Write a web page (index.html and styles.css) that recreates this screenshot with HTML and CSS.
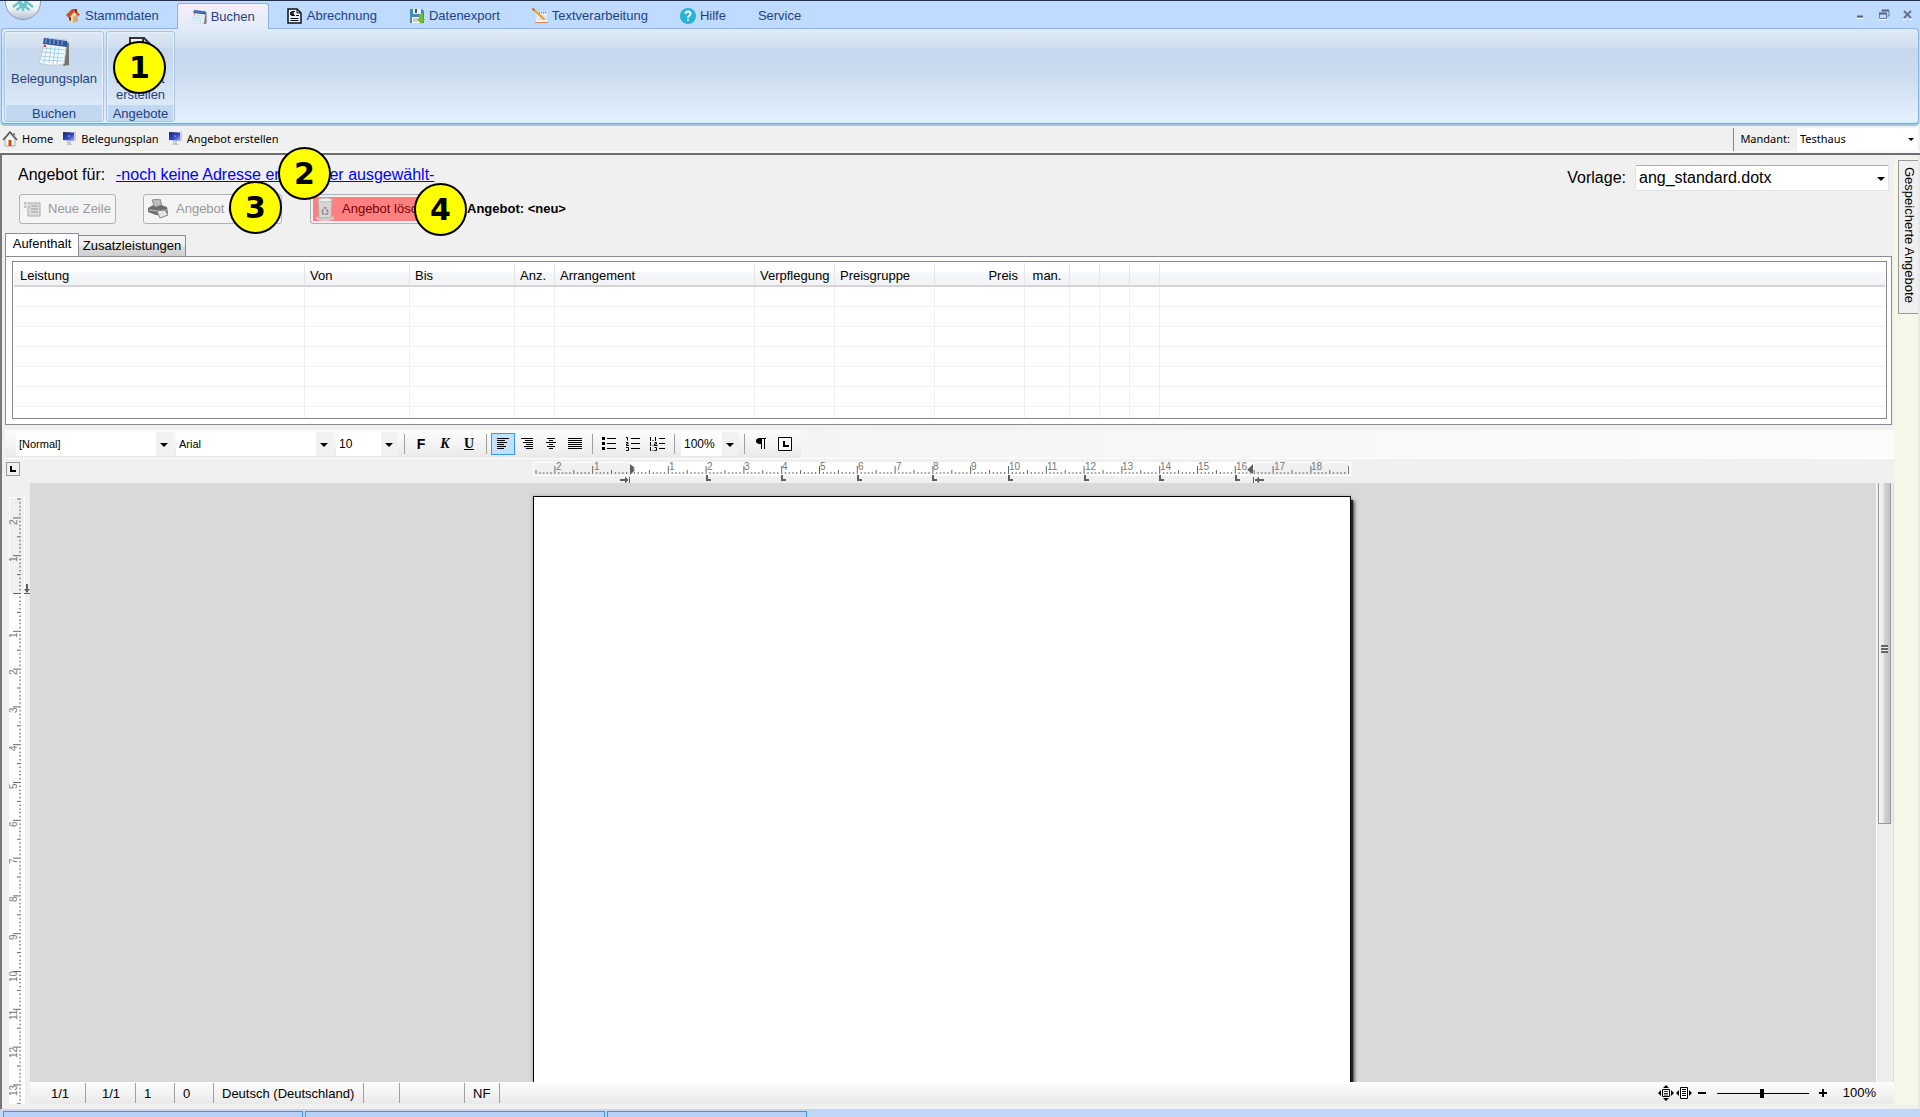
FILE: index.html
```html
<!DOCTYPE html>
<html lang="de">
<head>
<meta charset="utf-8">
<title>Angebot erstellen</title>
<link rel="stylesheet" href="styles.css">
</head>
<body>
<svg width="0" height="0" class="defs" aria-hidden="true">
  <defs>
    <linearGradient id="orb" x1="0" y1="0" x2="0" y2="1"><stop offset="0" stop-color="#fff"/><stop offset=".7" stop-color="#eef1f6"/><stop offset="1" stop-color="#b4bfd0"/></linearGradient>
    <linearGradient id="screen" x1="0" y1="0" x2="1" y2="1"><stop offset="0" stop-color="#16207a"/><stop offset=".6" stop-color="#3a4cc4"/><stop offset="1" stop-color="#a9b5f0"/></linearGradient>
    <symbol id="calendar" viewBox="0 0 32 30">
      <path d="M27 3l4 3v22l-6 1z" fill="#77746b"/>
      <path d="M6 1l23 2-3 24c-8 2-17 1-25-1C4 18 6 10 6 1z" fill="#f7fbfd" stroke="#c5ccd0"/>
      <path d="M6 1l23 3v6L5 7z" fill="#2b559c"/>
      <path d="M8 2v4M12 2v5M16 3v4M20 3v5M24 4v4" stroke="#9fb4d8"/>
      <path d="M5 11l22 2M4 15l22 2M3 19l22 2M3 23l22 1M9 9L6 26M13 9l-2 17M17 10l-2 17M21 10l-2 17" stroke="#a3d3e4" fill="none"/>
      <path d="M6 8h2v2H6z" fill="#d33"/>
    </symbol>
    <symbol id="monitor" viewBox="0 0 15 15">
      <path d="M1 1l11 .5V10L1 9z" fill="url(#screen)"/><path d="M12 1l2-1v10l-2 .5z" fill="#c9ccd6"/>
      <path d="M5 10l4 .5v2l2 1.5H4l1-1.500z" fill="#c4c8d0"/><path d="M6 4l2 1-1 1.500z" fill="#9fb4ff"/>
    </symbol>
    <pattern id="cmx" width="37.8" height="14" patternUnits="userSpaceOnUse" x="97">
      <path d="M.5 4v8M19.400 8v4M4.300 10v2M8.100 10v2M11.800 10v2M15.600 10v2M23.200 10v2M27 10v2M30.700 10v2M34.500 10v2" stroke="#666"/>
    </pattern>
    <pattern id="cmy" width="16" height="37.8" patternUnits="userSpaceOnUse" y="96">
      <path d="M4 .5h8M8 19.400h4M10 4.300h2M10 8.100h2M10 11.800h2M10 15.600h2M10 23.200h2M10 27h2M10 30.700h2M10 34.500h2" stroke="#666"/>
    </pattern>
  </defs>
</svg>

<header>
  <nav class="tabbar" aria-label="Menüband">
    <a class="logo" href="#" aria-label="Start"><svg width="38" height="20" viewBox="0 0 38 20"><circle cx="19" cy="1" r="17.500" fill="url(#orb)" stroke="#8e9db5"/><path d="M9 6l9-7M29 6l-9-7M16.500 0v6l-4 3M21.500 0v6l4 3M19 2v8" stroke="#6cc5c8" stroke-width="2.500" fill="none"/></svg></a>
    <a class="tab" href="#"><svg width="16" height="16" viewBox="0 0 16 16"><path d="M3 7l5-4 5 5v5l-5 2-5-3z" fill="#f4d9b4"/><path d="M8 9l5-3v7l-5 2z" fill="#dba976"/><path d="M1 7l6-6 3 0 5 6-2 1-4-4-5 6z" fill="#c8502c"/><path d="M10 1h2v3h-2z" fill="#7a3a22"/><path d="M4 9h2v4l-2-1z" fill="#6b3d22"/></svg>Stammdaten</a>
    <a class="tab active" href="#"><svg width="16" height="16"><use href="#calendar"/></svg>Buchen</a>
    <a class="tab" href="#"><svg width="16" height="16" viewBox="0 0 16 16"><path d="M1 1h9l4 4v10H1z" fill="#e8f1ff" stroke="#111" stroke-width="1.500"/><path d="M10 1v4h4M3.500 12.500h8M3.500 10.500h8M9 7.500h3" stroke="#111" fill="none"/><path d="M8 3.500H6q-2 0-2 2t2 2h2M3 4.800h4M3 6.300h4" stroke="#111" fill="none" stroke-width="1.200"/></svg>Abrechnung</a>
    <a class="tab" href="#"><svg width="16" height="16" viewBox="0 0 16 16"><path d="M1 1h12l2 2v12H1z" fill="#3f8fb5"/><path d="M4 1h8v5H4z" fill="#e8f0f4"/><path d="M6 1h2v4H6z" fill="#35586a"/><path d="M3 9h10v6H3z" fill="#fff"/><path d="M4 11h6M4 13h5" stroke="#99a"/><path d="M10 6h4v5h2l-4 5-4-5h2z" fill="#6cc024"/></svg>Datenexport</a>
    <a class="tab" href="#"><svg width="16" height="16" viewBox="0 0 16 16"><path d="M4 4l11 1-1 5 2 5H3l2-5z" fill="#f4f5fa"/><path d="M5 5h10" stroke="#444a66" stroke-dasharray="1 1"/><path d="M3 14.500h13" stroke="#d8895a"/><path d="M6 8h7M6 11h8" stroke="#b8c4e0"/><path d="M1.500 1.500l11 10" stroke="#e8a21d" stroke-width="2"/><path d="M0 0l3 1-2 2z" fill="#b5412e"/></svg>Textverarbeitung</a>
    <a class="tab" href="#"><svg width="16" height="16" viewBox="0 0 16 16"><circle cx="8" cy="8" r="8" fill="#25b4d5"/><path d="M5.500 6q0-2.500 2.500-2.500T10.500 6Q10.500 7.300 9 8 8 8.500 8 10M8 11.300v1.700" stroke="#fff" stroke-width="1.900" fill="none"/></svg>Hilfe</a>
    <a class="tab" href="#">Service</a>
    <div class="winbtns">
      <button type="button" aria-label="Minimieren"><svg width="12" height="12" viewBox="0 0 12 12"><path d="M3 7.500h6" stroke="#54657c" stroke-width="2"/><path d="M3 9.500h6" stroke="#fff"/></svg></button>
      <button type="button" aria-label="Wiederherstellen"><svg width="12" height="12" viewBox="0 0 12 12"><path d="M4 3V1.500h7V7H9M1.500 4.500h7v5h-7z" fill="none" stroke="#6c7f9c"/><path d="M1 4.500h8M4 1.500h7" stroke="#54657c" stroke-width="2"/><path d="M1 10.500h8" stroke="#fff"/></svg></button>
      <button type="button" aria-label="Schließen"><svg width="12" height="12" viewBox="0 0 12 12"><path d="M2 2l7 7M9 2L2 9" stroke="#66758c" stroke-width="2"/><path d="M1 10.500h3M7 10.500h3" stroke="#fff"/></svg></button>
    </div>
  </nav>
  <div class="ribbon">
    <section class="group">
      <button type="button"><svg width="32" height="30"><use href="#calendar"/></svg><span>Belegungsplan</span></button>
      <h2>Buchen</h2>
    </section>
    <section class="group">
      <button type="button"><svg width="32" height="30" viewBox="0 0 32 30"><path d="M5 1h14l6 6v20H5z" fill="#f2f5f8" stroke="#333" stroke-width="2"/><path d="M18 1v7h7" fill="none" stroke="#333" stroke-width="2"/></svg><span>Angebot<br>erstellen</span></button>
      <h2>Angebote</h2>
    </section>
  </div>
</header>

<nav class="crumbs" aria-label="Verlauf">
  <a href="#"><svg width="16" height="16" viewBox="0 0 16 16"><path d="M3 8l5-6 5 6v7H3z" fill="#f3f3ef" stroke="#aaa"/><path d="M1 9l7-8 7 8" fill="none" stroke="#555" stroke-width="1.500"/><path d="M6.500 9h3v6h-3z" fill="#c0521c"/><path d="M11 2h2v3h-2z" fill="#888"/></svg>Home</a>
  <a href="#"><svg width="15" height="15"><use href="#monitor"/></svg>Belegungsplan</a>
  <a href="#"><svg width="15" height="15"><use href="#monitor"/></svg>Angebot erstellen</a>
  <div class="client">
    <label for="mandant">Mandant:</label>
    <span class="combo"><select id="mandant"><option>Testhaus</option></select></span>
  </div>
</nav>

<div class="main">
  <main>
    <div class="offer-row">
      <span class="for">Angebot für:</span>
      <a class="address" href="#">-noch keine Adresse erfaßt oder ausgewählt-</a>
      <label class="tpl-label" for="vorlage">Vorlage:</label>
      <span class="combo tpl"><select id="vorlage"><option>ang_standard.dotx</option></select></span>
    </div>
    <div class="actions">
      <button type="button" class="new" disabled><svg width="18" height="18" viewBox="0 0 18 18"><path d="M5 3h12v13H5z" fill="#ddd" stroke="#aaa"/><path d="M8 6h7M8 9h7M8 12h7" stroke="#999"/><path d="M1 2h6v6H1z" fill="#c4c4c4"/><path d="M1 5h7M4 1v7" stroke="#eee"/></svg>Neue Zeile</button>
      <button type="button" class="print" disabled><svg width="22" height="20" viewBox="0 0 22 20"><path d="M5 1l8-1 2 7-7 2z" fill="#bbb" stroke="#888"/><path d="M1 9l5-3 2 2 6-2 6 2 1 6-3 3-9-1-8-3z" fill="#6c6c6c"/><path d="M2 11l9 1 9-1" stroke="#aaa" stroke-width="1.500" fill="none"/><path d="M10 12l8-1 3 5-8 3z" fill="#e6e6e6" stroke="#888"/></svg>Angebot drucken</button>
      <button type="button" class="delete" disabled><svg width="20" height="24" viewBox="0 0 20 24"><ellipse cx="10" cy="21" rx="9" ry="3" fill="#d8d0d0"/><path d="M3 3h14l-1 18H4z" fill="#d9d4d4" stroke="#b5a9a9"/><ellipse cx="10" cy="3" rx="7" ry="2" fill="#eee" stroke="#bbb"/><path d="M7 15l2-4h2l2 4-1 2H8z" fill="none" stroke="#888" stroke-width="1.500" stroke-dasharray="3 1"/></svg>Angebot löschen</button>
      <strong>Angebot: &lt;neu&gt;</strong>
    </div>

    <div class="tabs" role="tablist">
      <button type="button" role="tab" aria-selected="true">Aufenthalt</button>
      <button type="button" role="tab" aria-selected="false">Zusatzleistungen</button>
    </div>
    <div class="panel" role="tabpanel">
      <div class="grid">
        <table>
          <colgroup><col class="w291"><col class="w105"><col class="w105"><col class="w40"><col class="w200"><col class="w80"><col class="w100"><col class="w90"><col class="w45"><col class="w30"><col class="w30"><col class="w30"><col></colgroup>
          <thead><tr><th>Leistung</th><th>Von</th><th>Bis</th><th>Anz.</th><th>Arrangement</th><th>Verpflegung</th><th>Preisgruppe</th><th class="num">Preis</th><th class="mid">man.</th><th></th><th></th><th></th><th></th></tr></thead>
          <tbody>
            <tr><td></td><td></td><td></td><td></td><td></td><td></td><td></td><td></td><td></td><td></td><td></td><td></td><td></td></tr>
            <tr><td></td><td></td><td></td><td></td><td></td><td></td><td></td><td></td><td></td><td></td><td></td><td></td><td></td></tr>
            <tr><td></td><td></td><td></td><td></td><td></td><td></td><td></td><td></td><td></td><td></td><td></td><td></td><td></td></tr>
            <tr><td></td><td></td><td></td><td></td><td></td><td></td><td></td><td></td><td></td><td></td><td></td><td></td><td></td></tr>
            <tr><td></td><td></td><td></td><td></td><td></td><td></td><td></td><td></td><td></td><td></td><td></td><td></td><td></td></tr>
            <tr><td></td><td></td><td></td><td></td><td></td><td></td><td></td><td></td><td></td><td></td><td></td><td></td><td></td></tr>
            <tr><td></td><td></td><td></td><td></td><td></td><td></td><td></td><td></td><td></td><td></td><td></td><td></td><td></td></tr>
          </tbody>
        </table>
      </div>
    </div>

    <div class="toolstrip">
      <div class="tools">
        <span class="combo style"><select aria-label="Formatvorlage"><option>[Normal]</option></select></span>
        <span class="combo font"><select aria-label="Schriftart"><option>Arial</option></select></span>
        <span class="combo size"><select aria-label="Schriftgröße"><option>10</option></select></span>
        <i class="sep"></i>
        <button type="button" class="bold">F</button>
        <button type="button" class="italic">K</button>
        <button type="button" class="under">U</button>
        <i class="sep"></i>
        <button type="button" class="on" aria-label="Linksbündig"><svg width="14" height="14" viewBox="0 0 14 14"><path d="M1 1.500h12M1 3.500h8M1 5.500h10M1 7.500h7M1 9.500h9M1 11.500h7" stroke="#000"/></svg></button>
        <button type="button" aria-label="Rechtsbündig"><svg width="14" height="14" viewBox="0 0 14 14"><path d="M1 1.500h12M5 3.500h8M3 5.500h10M6 7.500h7M4 9.500h9M6 11.500h7" stroke="#000"/></svg></button>
        <button type="button" aria-label="Zentriert"><svg width="14" height="14" viewBox="0 0 14 14"><path d="M3 1.500h8M5 3.500h4M2 5.500h10M5 7.500h4M3 9.500h8M5 11.500h4" stroke="#000"/></svg></button>
        <button type="button" aria-label="Blocksatz"><svg width="14" height="14" viewBox="0 0 14 14"><path d="M0 1.500h14M0 3.500h14M0 5.500h14M0 7.500h14M0 9.500h14M0 11.500h14" stroke="#000"/></svg></button>
        <i class="sep"></i>
        <button type="button" aria-label="Aufzählung"><svg width="14" height="14" viewBox="0 0 14 14"><path d="M0 0h3v3H0zM0 5h3v3H0zM0 10h3v3H0z"/><path d="M5 1.500h9M5 6.500h9M5 11.500h9" stroke="#000"/></svg></button>
        <button type="button" aria-label="Nummerierung"><svg width="14" height="14" viewBox="0 0 14 14"><path d="M5 1.500h9M5 6.500h9M5 11.500h9M0 .5h1.500v3M0 5.500h2v1.500H.5v1.500H3M0 10.500h2.500v3H0" stroke="#000" fill="none"/></svg></button>
        <button type="button" aria-label="Gliederung"><svg width="16" height="14" viewBox="0 0 16 14"><path d="M1.500 0v4M3.500 3.500h1M6.500 0v4M10 1.500h6M1.500 5v4M3.500 8.500h1M5.500 5.500h2v1.500h-2v1.500h3M10 6.500h6M1.500 10v4M3.500 13.500h1M5.500 10.500h2v3h-2M10 11.500h6" stroke="#000" fill="none"/></svg></button>
        <i class="sep"></i>
        <span class="combo zoom"><select aria-label="Zoom"><option>100%</option></select></span>
        <i class="sep"></i>
        <button type="button" aria-label="Steuerzeichen"><svg width="12" height="14" viewBox="0 0 12 14"><path d="M4 1.500h7M6.500 1v11M9.500 1v11" stroke="#000"/><path d="M7 1v6H5Q1 7 1 4t4-3z"/></svg></button>
        <button type="button" aria-label="Tabulatoren"><svg width="14" height="14" viewBox="0 0 14 14"><path d="M.5.500h13v13H.5z" fill="#fff" stroke="#000"/><path d="M6 4v5h5" stroke="#000" stroke-width="2" fill="none"/></svg></button>
      </div>
    </div>

    <div class="editor">
      <button type="button" class="tabtype" aria-label="Tabulatorart"><svg width="14" height="14" viewBox="0 0 14 14"><path d="M5 4v5h5" stroke="#000" stroke-width="2" fill="none"/></svg></button>
      <div class="hruler">
        <svg width="818" height="21" viewBox="0 0 818 21" shape-rendering="crispEdges">
          <path d="M0 0h818v14H0z" fill="#fff"/><path d="M1 1h96v12H1zM721 1h96v12h-96z" fill="#f0f0f0"/>
          <path d="M2 0h814v14H2z" fill="url(#cmx)"/>
          <g class="marks"><text x="23" y="8">2</text><text x="61" y="8">1</text><text x="136" y="8">1</text><text x="174" y="8">2</text><text x="211" y="8">3</text><text x="249" y="8">4</text><text x="287" y="8">5</text><text x="325" y="8">6</text><text x="363" y="8">7</text><text x="400" y="8">8</text><text x="438" y="8">9</text><text x="476" y="8">10</text><text x="514" y="8">11</text><text x="552" y="8">12</text><text x="589" y="8">13</text><text x="627" y="8">14</text><text x="665" y="8">15</text><text x="703" y="8">16</text><text x="741" y="8">17</text><text x="778" y="8">18</text></g>
          <path d="M174 13v5h4M249 13v5h4M325 13v5h4M400 13v5h4M476 13v5h4M552 13v5h4M627 13v5h4M703 13v5h4" stroke="#606060" stroke-width="2" fill="none"/>
          <path d="M97 2l5 4-2 1 2 1-5 5zM720 2l-6 6 6 4z" fill="#606060" shape-rendering="auto"/>
          <path d="M87 18h8M722 18h9" stroke="#606060" stroke-width="2"/><path d="M96.500 15v6M720.500 15v6" stroke="#606060"/><path d="M92 15l4 3-4 3zM726 15l-4 3 4 3z" fill="#606060"/>
        </svg>
      </div>
      <div class="vruler">
        <div class="scale"><svg width="16" height="1123" viewBox="0 0 16 1123" shape-rendering="crispEdges">
          <path d="M0 0h16v1123H0z" fill="#fff"/><path d="M1 1h14v95H1z" fill="#f0f0f0"/><path d="M0 1h16v1121H0z" fill="url(#cmy)"/>
          <g class="marks"><text transform="translate(8 28) rotate(-90)">2</text><text transform="translate(8 65) rotate(-90)">1</text><text transform="translate(8 141) rotate(-90)">1</text><text transform="translate(8 178) rotate(-90)">2</text><text transform="translate(8 216) rotate(-90)">3</text><text transform="translate(8 254) rotate(-90)">4</text><text transform="translate(8 292) rotate(-90)">5</text><text transform="translate(8 330) rotate(-90)">6</text><text transform="translate(8 367) rotate(-90)">7</text><text transform="translate(8 405) rotate(-90)">8</text><text transform="translate(8 443) rotate(-90)">9</text><text transform="translate(8 485) rotate(-90)">10</text><text transform="translate(8 523) rotate(-90)">11</text><text transform="translate(8 561) rotate(-90)">12</text><text transform="translate(8 599) rotate(-90)">13</text></g>
        </svg></div>
        <svg class="topmark" width="6" height="11" viewBox="0 0 6 11"><path d="M3 0v7" stroke="#606060" stroke-width="2"/><path d="M0 9.500h6" stroke="#606060"/><path d="M0 5h6L3 9z" fill="#606060"/></svg>
      </div>
      <div class="canvas"><div class="sheet" contenteditable="true" role="textbox" aria-label="Dokument"></div></div>
      <div class="scroll"><div class="thumb"><i></i></div></div>
      <footer class="status">
        <span class="s1">1/1</span><span class="s2">1/1</span><span class="s3">1</span><span class="s4">0</span><span class="s5">Deutsch (Deutschland)</span><span class="s6"></span><span class="s7"></span><span class="s8">NF</span>
        <div class="zoombar">
          <button type="button" aria-label="Ganze Seite"><svg width="16" height="16" viewBox="0 0 16 16"><path d="M4.500 4.500h7v7h-7z" fill="#fff" stroke="#000"/><path d="M6 6.500h4M6 8.500h4M6 10h4" stroke="#000" stroke-width=".8"/><path d="M8 0l3 3H5zM8 16l3-3H5zM0 8l3-3v6zM16 8l-3-3v6z"/></svg></button>
          <button type="button" aria-label="Seitenbreite"><svg width="16" height="16" viewBox="0 0 16 16"><path d="M4.500 2.500h7v11h-7z" fill="#fff" stroke="#000"/><path d="M6 4.500h4M6 6.500h4M6 8.500h4M6 10.500h4" stroke="#000"/><path d="M0 8l3-3v6zM16 8l-3-3v6z"/></svg></button>
          <button type="button" class="step" aria-label="Verkleinern"><svg width="8" height="8" viewBox="0 0 8 8"><path d="M0 4h8" stroke="#000" stroke-width="2"/></svg></button>
          <input type="range" aria-label="Zoomstufe" min="0" max="100" value="49">
          <button type="button" class="step" aria-label="Vergrößern"><svg width="8" height="8" viewBox="0 0 8 8"><path d="M0 4h8M4 0v8" stroke="#000" stroke-width="2"/></svg></button>
          <output>100%</output>
        </div>
      </footer>
    </div>
  </main>
  <aside><button type="button">Gespeicherte Angebote</button></aside>
</div>

<div class="taskbar"><button type="button" aria-label="Fenster 1"></button><button type="button" aria-label="Fenster 2"></button><button type="button" class="short" aria-label="Fenster 3"></button></div>

<b class="callout c1">1</b>
<b class="callout c2">2</b>
<b class="callout c3">3</b>
<b class="callout c4">4</b>
</body>
</html>
```
FILE: styles.css
```css
* { box-sizing: border-box; }
body {
  margin: 0;
  position: relative;
  display: flex;
  flex-direction: column;
  min-height: 100vh;
  background: #f0f0f0;
  font: 13px/16px "Liberation Sans", Arial, sans-serif;
  color: #000;
}
button, select, input { font: inherit; color: inherit; margin: 0; }
button { padding: 0; border: 0; background: none; }
a { color: inherit; text-decoration: none; }
svg { flex: none; display: block; }
.defs { position: absolute; }

/* ribbon */
header { background: #bfdbff; border-top: 1px solid #22304a; color: #1e4283; }
.tabbar { display: flex; height: 28px; gap: 4px; align-items: flex-end; }
.logo { width: 47px; padding-left: 4px; align-self: flex-start; }
.tab { display: flex; align-items: center; gap: 4px; height: 26px; padding: 0 14px; }
.tab.active {
  position: relative;
  z-index: 1;
  border: 1px solid #8db2e3;
  border-bottom: 0;
  border-radius: 3px 3px 0 0;
  padding: 0 13px;
  background: linear-gradient(#f3effb, #e3ebf8);
}
.winbtns { display: flex; gap: 12px; margin-left: auto; padding: 0 6px; align-self: center; }
.ribbon {
  display: flex;
  gap: 2px;
  height: 96px;
  margin: -1px 1px 0;
  padding: 2px;
  border: 1px solid #8db2e3;
  border-bottom-color: #7fa6cf;
  border-radius: 4px;
  background: linear-gradient(#dfebf6, #d1dfee 18px, #c6d7ee 19px, #cbdcee 45px, #e5f1ff);
  box-shadow: inset 0 -2px #cdf5ff, 0 2px #a6c4e8;
}
.group {
  display: flex;
  flex-direction: column;
  height: 91px;
  min-width: 69px;
  border: 1px solid #a9c5e3;
  border-radius: 3px;
  box-shadow: inset 0 0 0 1px #e6f0fa;
}
.group button { flex: 1; display: flex; flex-direction: column; align-items: center; padding: 5px 6px 0; gap: 4px; }
.group h2 { margin: 0 1px; height: 16px; font: inherit; line-height: 18px; text-align: center; background: #c1d8f0; }

.crumbs {
  display: flex;
  align-items: center;
  gap: 9px;
  height: 29px;
  padding: 1px 0 3px 2px;
  border-bottom: 2px solid #6e6e6e;
  margin-top: 2px;
  font: 11px/16px "Noto Sans", "Open Sans", sans-serif;
  box-shadow: inset 0 -2px #fafafa;
}
.crumbs a { display: flex; align-items: center; gap: 4px; }
.client { display: flex; align-items: center; margin: 1px 2px 0 auto; padding-left: 6px; height: 23px; gap: 7px; border-left: 1px solid #888; }
.client .combo { width: 121px; height: 23px; }

/* drop-downs */
.combo { position: relative; display: block; flex: none; background: #fff; }
.combo select { appearance: none; display: block; width: 100%; height: 100%; padding: 0 20px 0 3px; border: 0; background: transparent; }
.combo::after {
  content: "";
  position: absolute;
  right: 5px;
  top: 50%;
  margin-top: -1px;
  border: 4px solid transparent;
  border-top-color: #000;
  border-bottom: 0;
  pointer-events: none;
}
.client .combo::after { right: 4px; border-width: 3px; border-bottom: 0; }
.tpl.combo::after { right: 3px; }

.main { flex: 1; min-height: 0; display: flex; border-left: 2px solid #777; border-right: 2px solid #e8e8e8; }
main { flex: 1; min-width: 0; display: flex; flex-direction: column; }
aside { width: 24px; margin-top: 3px; margin-bottom: 4px; padding: 2px 0 0 4px; background: #f6f7e6; }
aside button {
  writing-mode: vertical-rl;
  width: 20px;
  height: 154px;
  padding-top: 6px;
  text-align: left;
  background: #f0f0f0;
  border: 1px solid #9a9a9a;
  border-right: 0;
}

.offer-row { display: flex; height: 39px; padding-right: 5px; font-size: 16px; line-height: 18px; white-space: nowrap; }
.for { width: 98px; padding: 11px 0 0 16px; }
.address { padding-top: 11px; margin-left: 16px; color: #00f; text-decoration: underline; }
.tpl-label { margin-left: auto; padding: 14px 9px 0 0; }
.tpl { width: 254px; height: 26px; margin-top: 10px; border: 1px solid #e0e3ea; border-top-color: #abadb3; border-radius: 2px; }

.actions { display: flex; align-items: center; padding-left: 17px; line-height: 18px; }
.actions button {
  display: flex;
  align-items: center;
  gap: 7px;
  height: 30px;
  padding: 0 3px;
  border: 1px solid #adb2b5;
  border-radius: 3px;
  background: #f4f4f4;
  color: #9a9a9a;
  white-space: nowrap;
}
.actions .new { width: 97px; }
.actions .print { width: 139px; margin-left: 27px; }
.actions .delete { width: 139px; margin: 0 18px 0 28px; background: #ff8080; color: #700; box-shadow: inset 0 0 0 2px #f0f0f0; padding: 0 4px; }

.tabs { display: flex; align-items: flex-end; margin: 9px 0 -1px 3px; height: 24px; }
.tabs button { width: 107px; height: 22px; border: 1px solid #898c95; border-left: 0; background: linear-gradient(#f2f2f2 45%, #dcdcdc 55%, #cfcfcf); line-height: 18px; }
.tabs button[aria-selected="true"] { width: 74px; height: 24px; padding-bottom: 3px; border: 1px solid #898c95; border-bottom: 0; background: #fff; }
.panel { margin: 0 2px 0 3px; padding: 4px 4px 5px 6px; border: 1px solid #898c95; background: #fff; }
.grid { height: 158px; overflow: hidden; padding: 1px; border: 1px solid #828790; }
table { width: 100%; table-layout: fixed; border-collapse: separate; border-spacing: 0; }
th { height: 24px; padding: 3px 5px 0; font-weight: 400; text-align: left; border-right: 1px solid #e3e4e6; border-bottom: 2px solid #d5d5d5; background: linear-gradient(#fff 40%, #f7f8fa 41%, #f1f2f4); white-space: nowrap; }
td { height: 20px; padding: 0; border-right: 1px solid #f0f0f0; border-bottom: 1px solid #f0f0f0; }
th:first-child { padding-left: 6px; }
th:last-child, td:last-child { border-right: 0; }
.num { text-align: right; padding-right: 6px; }
.mid { text-align: center; padding: 3px 0 0; }
.w291 { width: 291px; } .w105 { width: 105px; } .w40 { width: 40px; } .w200 { width: 200px; } .w80 { width: 80px; }
.w100 { width: 100px; } .w90 { width: 90px; } .w45 { width: 45px; } .w30 { width: 30px; }

/* text toolbar */
.toolstrip { margin: 5px 0 0 3px; height: 29px; border-bottom: 1px solid #fff; background: linear-gradient(90deg, #f4f4f4 40%, #fcfcfc); }
.tools { display: flex; align-items: center; width: 796px; height: 28px; padding: 0 8px 0 11px; border-radius: 0 3px 3px 0; background: linear-gradient(#fdfdfd, #e9e9e9); font-size: 12px; }
.tools .combo { height: 24px; background: linear-gradient(90deg, #fff calc(100% - 17px), #f1f1f1 0); }
.tools .style { width: 157px; margin-right: 3px; font-size: 11px; }
.tools .font { width: 157px; margin-right: 3px; font-size: 11px; }
.tools .size { width: 62px; margin-right: 1px; }
.tools .zoom { width: 58px; margin-left: 2px; }
.sep { flex: none; width: 1px; height: 20px; margin: 0 4px 0 5px; background: #a0a0a0; }
.tools button { display: flex; flex: none; align-items: center; justify-content: center; width: 24px; height: 22px; font: bold 14px/16px "Liberation Sans", Arial, sans-serif; }
.tools .italic { font-style: italic; font-family: "Liberation Serif", serif; }
.tools .under { text-decoration: underline; font-family: "Liberation Serif", serif; }
.tools .on { background: #c2e0ff; border: 1px solid #3399ff; }

/* document */
.editor { flex: 1; min-height: 0; display: grid; grid-template: 24px 1fr 22px / 28px 1fr 18px; padding-bottom: 5px; }
.tabtype { width: 14px; height: 14px; margin: 3px 0 0 4px; border: 1px solid #999; display: flex; align-items: center; justify-content: center; }
.hruler { grid-column: 2 / 4; padding: 3px 40px 0 0; display: flex; justify-content: center; }
.marks { font: 10px "Liberation Sans", Arial, sans-serif; fill: #777; }
.vruler { position: relative; grid-row: 2 / 4; margin: 14px 5px 0 7px; contain: size; }
.scale { height: 100%; overflow: hidden; }
.topmark { position: absolute; left: 15px; top: 87px; }
.canvas { display: flex; justify-content: center; padding: 13px 22px 0 0; background: #d9d9d9; overflow: hidden; }
.sheet { width: 818px; background: #fff; border: 1px solid #000; border-bottom: 0; box-shadow: 2px 4px 1px #222, 4px 5px 3px #666, 0 0 3px 1px #bbb; outline: 0; }
.scroll { padding: 0 2px 0 1px; background: #ededed; border-left: 1px solid #fafafa; border-right: 1px solid #dcdcdc; }
.thumb { height: 57%; padding-bottom: 8px; border: 1px solid #979797; border-top: 0; background: linear-gradient(90deg, #f6f6f6, #e6e6e8 45%, #d2d2d6 50%, #c4c4c8); display: flex; align-items: center; justify-content: center; }
.thumb i { width: 7px; height: 8px; background: repeating-linear-gradient(#666 0 2px, #eee 2px 3px); }

.status { grid-column: 2 / 4; display: flex; align-items: center; background: linear-gradient(#fdfdfd, #e9e9e9); }
.status span { height: 20px; line-height: 22px; border-right: 1px solid #a0a0a0; }
.s1 { width: 56px; padding-left: 21px; }
.s2 { width: 50px; padding-left: 16px; }
.s3 { width: 39px; padding-left: 8px; }
.s4 { width: 39px; padding-left: 8px; }
.s5 { width: 150px; padding-left: 8px; }
.s6 { width: 36px; }
.s7 { width: 65px; }
.s8 { width: 35px; padding-left: 8px; }
.zoombar { display: flex; align-items: center; margin-left: auto; padding-right: 18px; gap: 2px; }
.zoombar .step { padding: 4px; }
.zoombar output { margin-left: 10px; line-height: 22px; }
input[type="range"] { appearance: none; width: 92px; height: 12px; margin: 0 4px 0 5px; background: linear-gradient(#000, #000) center / 100% 1px no-repeat; }
input[type="range"]::-webkit-slider-thumb { appearance: none; width: 4px; height: 9px; background: #000; }

.taskbar { display: flex; gap: 2px; height: 8px; padding: 2px 3px 0; background: #c0d7f7; }
.taskbar button { width: 300px; border: 1px solid #3d95f5; border-bottom: 0; background: #b9d1f6; }
.taskbar .short { width: 200px; }

/* step markers */
.callout {
  position: absolute;
  width: 53px;
  height: 53px;
  border: 2px solid #000;
  border-radius: 50%;
  background: #ff0;
  font: bold 30px/50px "DejaVu Sans", sans-serif;
  text-align: center;
}
.c1 { left: 113px; top: 41px; }
.c2 { left: 278px; top: 147px; }
.c3 { left: 229px; top: 181px; }
.c4 { left: 414px; top: 183px; }
```
